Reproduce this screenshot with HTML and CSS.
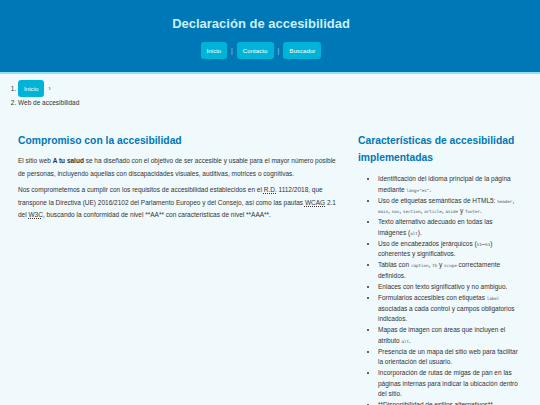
FILE: index.html
```html
<!DOCTYPE html>
<html lang="es">
<head>
<meta charset="utf-8">
<title>Declaración de accesibilidad</title>
<link rel="stylesheet" href="styles.css">
</head>
<body>
<header class="site-header">
  <h1 class="site-title">Declaración de accesibilidad</h1>
  <nav class="main-nav">
    <a class="nav-btn" href="#">Inicio</a>
    <span class="sep">|</span>
    <a class="nav-btn" href="#">Contacto</a>
    <span class="sep">|</span>
    <a class="nav-btn" href="#">Buscador</a>
  </nav>
</header>

<nav class="breadcrumb">
  <ol class="crumbs">
    <li class="crumb-first"><a class="nav-btn" href="#">Inicio</a><span class="chev">›</span></li>
    <li>Web de accesibilidad</li>
  </ol>
</nav>

<main class="content">
  <section class="col-main">
    <h2 class="sec-title">Compromiso con la accesibilidad</h2>
    <p>El sitio web <strong>A tu salud</strong> se ha diseñado con el objetivo de ser accesible y usable para el mayor número posible de personas, incluyendo aquellas con discapacidades visuales, auditivas, motrices o cognitivas.</p>
    <p>Nos comprometemos a cumplir con los requisitos de accesibilidad establecidos en el <abbr title="Real Decreto">R.D.</abbr> 1112/2018, que transpone la Directiva (UE) 2016/2102 del Parlamento Europeo y del Consejo, así como las pautas <abbr title="Web Content Accessibility Guidelines">WCAG</abbr> 2.1 del <abbr title="World Wide Web Consortium">W3C</abbr>, buscando la conformidad de nivel **AA** con características de nivel **AAA**.</p>
  </section>
  <aside class="col-side">
    <h2 class="sec-title">Características de accesibilidad implementadas</h2>
    <ul class="features">
      <li>Identificación del idioma principal de la página mediante <code>lang="es"</code>.</li>
      <li>Uso de etiquetas semánticas de HTML5: <code>header</code>, <code>main</code>, <code>nav</code>, <code>section</code>, <code>article</code>, <code>aside</code> y <code>footer</code>.</li>
      <li>Texto alternativo adecuado en todas las imágenes (<code>alt</code>).</li>
      <li>Uso de encabezados jerárquicos (<code>h1</code>–<code>h3</code>) coherentes y significativos.</li>
      <li>Tablas con <code>caption</code>, <code>th</code> y <code>scope</code> correctamente definidos.</li>
      <li>Enlaces con texto significativo y no ambiguo.</li>
      <li>Formularios accesibles con etiquetas <code>label</code> asociadas a cada control y campos obligatorios indicados.</li>
      <li>Mapas de imagen con áreas que incluyen el atributo <code>alt</code>.</li>
      <li>Presencia de un mapa del sitio web para facilitar la orientación del usuario.</li>
      <li>Incorporación de rutas de migas de pan en las páginas internas para indicar la ubicación dentro del sitio.</li>
      <li>**Disponibilidad de estilos alternativos**</li>
    </ul>
  </aside>
</main>
</body>
</html>
```

FILE: styles.css
```css
html, body {
  margin: 0;
  padding: 0;
}
body {
  background: #f0f9fc;
  color: #333;
  font-family: "Liberation Sans", Arial, sans-serif;
  font-size: 6.5px;
}
.site-header {
  background: #0077b6;
  border-bottom: 2px solid #90e0ef;
  padding: 15px 18px 13px 0;
  text-align: center;
}
.site-title {
  margin: 0 0 9px;
  font-size: 13px;
  line-height: 18px;
  color: #caf0f8;
  font-weight: bold;
}
.main-nav {
  display: flex;
  justify-content: center;
  align-items: center;
  gap: 4px;
}
.sep {
  color: #90e0ef;
  font-size: 6.6px;
}
.nav-btn {
  display: inline-block;
  background: #00b4d8;
  color: #fff;
  text-decoration: none;
  border-radius: 3px;
  padding: 4px 6px;
  line-height: 9px;
  font-size: 6.2px;
}
.breadcrumb {
  padding: 6px 0 0;
}
.crumbs {
  margin: 0;
  padding-left: 18px;
  line-height: 11px;
}
.crumb-first {
  line-height: 17px;
}
.chev {
  margin-left: 4px;
  color: #555;
}
.content {
  display: grid;
  grid-template-columns: 326px 1fr;
  gap: 14px;
  padding: 24px 19px 0 18px;
  align-items: start;
}
.sec-title {
  margin: 0;
  color: #0077b6;
  font-size: 10.3px;
  line-height: 17px;
  font-weight: bold;
}
.col-main .sec-title {
  margin-bottom: 6px;
}
.col-side .sec-title {
  margin-bottom: 8px;
}
.col-main p {
  margin: 0 0 4px;
  line-height: 12.5px;
}
.features {
  margin: 0;
  padding-left: 20px;
  line-height: 10.5px;
}
.features li {
  margin-bottom: 0.6px;
}
code {
  font-family: "DejaVu Sans Mono", "Liberation Mono", monospace;
  font-size: 4.2px;
  line-height: 1;
  color: #555;
}
abbr[title] {
  text-decoration: underline dotted;
}
```
